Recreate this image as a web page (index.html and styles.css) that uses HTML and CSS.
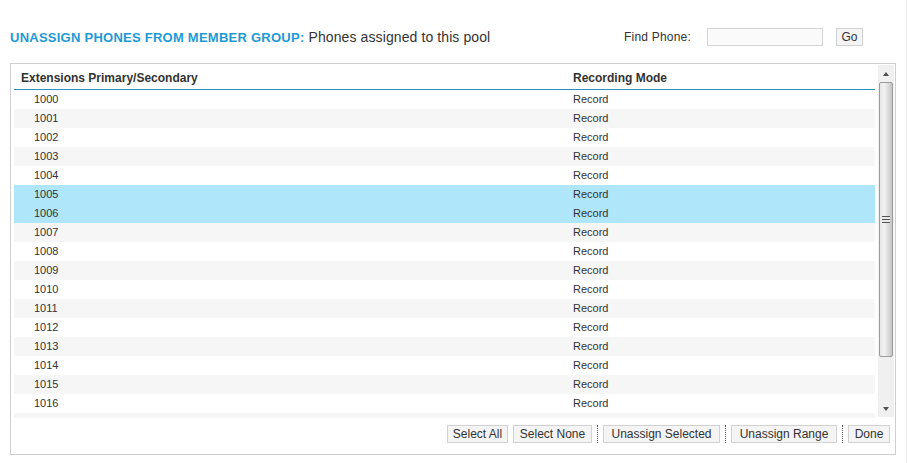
FILE: index.html
```html
<!DOCTYPE html>
<html>
<head>
<meta charset="utf-8">
<link rel="stylesheet" href="styles.css">
</head>
<body>
<div class="page">
  <div class="topbar">
    <div class="title"><span class="title-strong">UNASSIGN PHONES FROM MEMBER GROUP:</span><span class="title-sub">Phones assigned to this pool</span></div>
    <div class="find">
      <span class="find-label">Find Phone:</span>
      <input class="find-input" type="text">
      <button class="btn go">Go</button>
    </div>
  </div>
  <div class="panel">
    <div class="gridwrap">
      <div class="grid">
        <div class="ghead">
          <div class="col1 hcell">Extensions Primary/Secondary</div>
          <div class="col2 hcell">Recording Mode</div>
        </div>
        <div class="rows">
          <div class="row"><div class="col1">1000</div><div class="col2">Record</div></div>
          <div class="row alt"><div class="col1">1001</div><div class="col2">Record</div></div>
          <div class="row"><div class="col1">1002</div><div class="col2">Record</div></div>
          <div class="row alt"><div class="col1">1003</div><div class="col2">Record</div></div>
          <div class="row"><div class="col1">1004</div><div class="col2">Record</div></div>
          <div class="row sel"><div class="col1">1005</div><div class="col2">Record</div></div>
          <div class="row sel"><div class="col1">1006</div><div class="col2">Record</div></div>
          <div class="row alt"><div class="col1">1007</div><div class="col2">Record</div></div>
          <div class="row"><div class="col1">1008</div><div class="col2">Record</div></div>
          <div class="row alt"><div class="col1">1009</div><div class="col2">Record</div></div>
          <div class="row"><div class="col1">1010</div><div class="col2">Record</div></div>
          <div class="row alt"><div class="col1">1011</div><div class="col2">Record</div></div>
          <div class="row"><div class="col1">1012</div><div class="col2">Record</div></div>
          <div class="row alt"><div class="col1">1013</div><div class="col2">Record</div></div>
          <div class="row"><div class="col1">1014</div><div class="col2">Record</div></div>
          <div class="row alt"><div class="col1">1015</div><div class="col2">Record</div></div>
          <div class="row"><div class="col1">1016</div><div class="col2">Record</div></div>
          <div class="row alt stub"></div>
        </div>
      </div>
      <div class="scrollbar">
        <div class="arrow up"></div>
        <div class="thumb"><div class="grip"></div></div>
        <div class="track"></div>
        <div class="arrow down"></div>
      </div>
    </div>
    <div class="footer">
      <button class="btn b-all">Select All</button>
      <button class="btn b-none">Select None</button>
      <span class="sep"></span>
      <button class="btn b-sel">Unassign Selected</button>
      <span class="sep"></span>
      <button class="btn b-range">Unassign Range</button>
      <span class="sep"></span>
      <button class="btn b-done">Done</button>
    </div>
  </div>
</div>
</body>
</html>
```
FILE: styles.css
```css
html, body {
  margin: 0;
  padding: 0;
  background: #fff;
}
body {
  font-family: "Liberation Sans", Arial, sans-serif;
  color: #333;
}
.page {
  width: 907px;
  height: 463px;
  border-right: 1px solid #ececec;
  box-sizing: border-box;
  padding-top: 28px;
  overflow: hidden;
}
.topbar {
  display: flex;
  align-items: center;
  justify-content: space-between;
  height: 18px;
  padding-left: 10px;
  width: 853px;
}
.title {
  display: flex;
  align-items: baseline;
  gap: 4px;
}
.title-strong {
  font-weight: bold;
  font-size: 13px;
  letter-spacing: 0.25px;
  color: #1d9ad5;
}
.title-sub {
  font-size: 14px;
  letter-spacing: 0.1px;
  color: #333;
}
.find {
  display: flex;
  align-items: center;
}
.find-label {
  font-size: 12px;
  letter-spacing: 0.2px;
  color: #333;
  margin-right: 16px;
}
.find-input {
  width: 116px;
  height: 18px;
  box-sizing: border-box;
  border: 1px solid #d4d4d4;
  background: #fafafa;
  padding: 0 3px;
  margin: 0 13px 0 0;
  font: 12px "Liberation Sans", Arial, sans-serif;
  outline: none;
}
.btn {
  font: 12px "Liberation Sans", Arial, sans-serif;
  color: #333;
  background: #f4f4f4;
  border: 1px solid #d2d2d2;
  height: 18px;
  padding: 0;
  margin: 0;
  line-height: 16px;
  box-sizing: border-box;
  text-align: center;
}
.go { width: 27px; }
.b-all { width: 61px; }
.b-none { width: 79px; }
.b-sel { width: 117px; }
.b-range { width: 106px; }
.b-done { width: 42px; }
.panel {
  margin: 17px 0 0 10px;
  width: 886px;
  height: 392px;
  box-sizing: border-box;
  border: 1px solid #cfcfcf;
  padding: 1px 0 0 3px;
}
.gridwrap {
  display: flex;
  height: 353px;
}
.grid {
  width: 861px;
  display: flex;
  flex-direction: column;
}
.ghead {
  display: flex;
  height: 23px;
  align-items: center;
  border-bottom: 1px solid #2a8fbf;
  padding-top: 1px;
}
.hcell {
  font-weight: bold;
  font-size: 12px;
  color: #333;
}
.ghead .col1 {
  padding-left: 7px;
  width: 552px;
}
.rows {
  height: 328px;
  overflow: hidden;
}
.row {
  display: flex;
  height: 19px;
  box-sizing: border-box;
  padding-bottom: 2px;
  align-items: center;
  font-size: 11px;
  color: #333;
  background: #fff;
}
.row.alt {
  background: #f6f6f6;
}
.row.sel {
  background: #b0e6f9;
}
.row.stub {
  height: 5px;
  padding: 0;
}
.row .col1 {
  padding-left: 20px;
  width: 539px;
}
.scrollbar {
  margin-left: 3px;
  width: 16px;
  height: 352px;
  display: flex;
  flex-direction: column;
  background: #f0f0f0;
}
.arrow {
  height: 17px;
  display: flex;
  align-items: center;
  justify-content: center;
}
.arrow::before {
  content: "";
  width: 0;
  height: 0;
  border-left: 3.5px solid transparent;
  border-right: 3.5px solid transparent;
}
.arrow.up::before {
  border-bottom: 4px solid #505050;
}
.arrow.down::before {
  border-top: 4px solid #505050;
}
.thumb {
  height: 275px;
  margin: 0 1px 0 1px;
  box-sizing: border-box;
  border: 1px solid #9c9c9c;
  border-radius: 2px;
  background: linear-gradient(to right, #e6e6e6 0%, #f2f2f2 35%, #dadada 70%, #c6c6c6 100%);
  display: flex;
  align-items: center;
  justify-content: center;
}
.grip {
  width: 8px;
  height: 7px;
  background: repeating-linear-gradient(to bottom, #555 0 1px, #e8e8e8 1px 3px);
}
.track {
  flex: 1;
}
.footer {
  display: flex;
  justify-content: flex-end;
  align-items: center;
  padding: 7px 5px 0 0;
  gap: 5px;
}
.sep {
  display: inline-block;
  height: 18px;
  border-left: 1px dotted #555;
}
```
